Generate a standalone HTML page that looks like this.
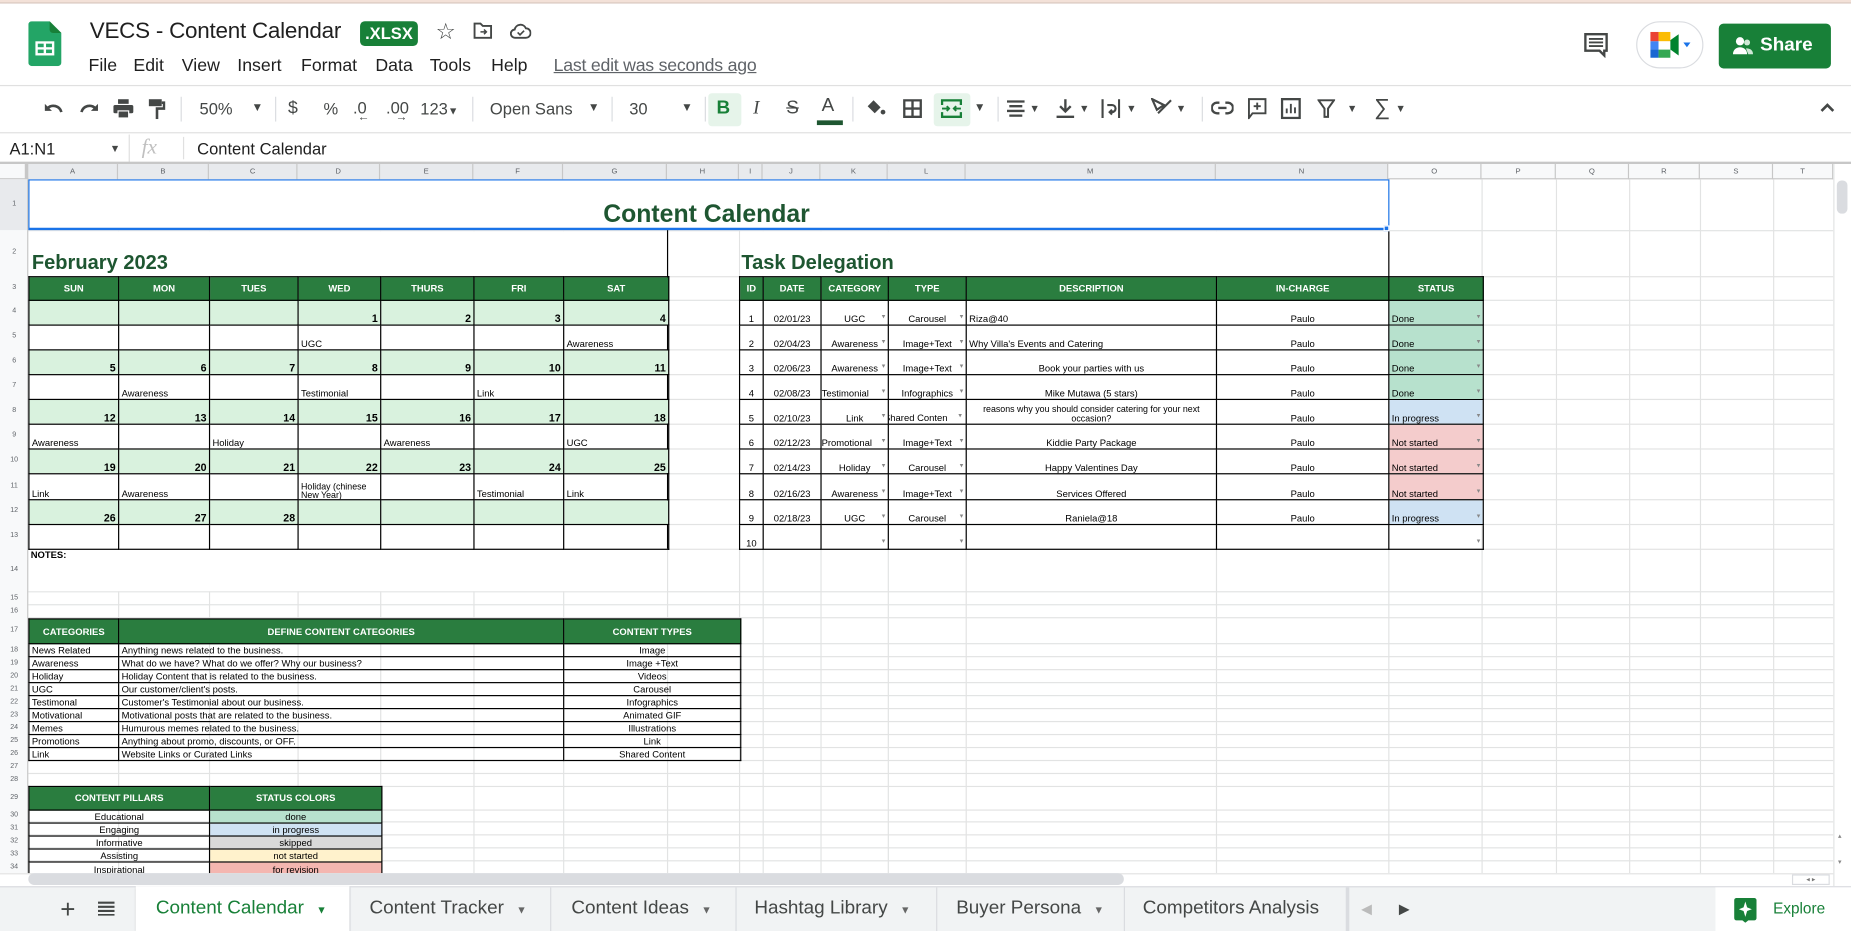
<!DOCTYPE html>
<html><head><meta charset="utf-8"><style>
*{box-sizing:border-box}
html,body{margin:0;padding:0;width:1851px;height:931px;overflow:hidden;background:#fff;font-family:"Liberation Sans",Arial,sans-serif}
#s{position:absolute;left:0;top:0;width:1568px;height:789px;transform:scale(1.18048,1.18);transform-origin:0 0;overflow:hidden;background:#fff}
.a{position:absolute}
.ic{position:absolute;color:#444746;font-size:15px;line-height:1}
.sep{position:absolute;top:82px;width:1px;height:21px;background:#dadce0}
.vl{position:absolute;top:152px;width:1px;height:588px;background:#e2e3e3}
.hl{position:absolute;left:0;width:1553px;height:1px;background:#e2e3e3}
.rn{position:absolute;left:0;width:24px;text-align:center;font-size:6px;color:#5f6368}
.ch{position:absolute;top:139px;height:13px;font-size:6.5px;color:#5f6368;text-align:center;line-height:13px;border-right:1px solid #c7c7c7}
.m{position:absolute;top:47px;font-size:15px;color:#1f1f1f}
table{position:absolute;border-collapse:collapse;table-layout:fixed;font-size:8px;color:#000}
td{border:1px solid #000;padding:0 2px;vertical-align:bottom;white-space:nowrap;overflow:hidden;line-height:9px}
th{background:#2a7d3f;color:#fff;font-size:8px;font-weight:bold;border:1px solid #000;padding:0;text-align:center;vertical-align:middle}
.g td{background:#d9f2de}
.n{text-align:right;font-weight:bold;font-size:9px}
.c{text-align:center}
.dd{position:relative}
.dd:after{content:"▾";position:absolute;right:2px;bottom:1px;font-size:6px;color:#888}
.done{background:#b7e1cd}.prog{background:#cfe2f3}.ns{background:#f4cccc}
.tab{position:absolute;top:751px;height:38px;line-height:38px;font-size:16px;color:#444746}
</style></head><body><div id="s">
<div class="a" style="left:0;top:0;width:1568px;height:3px;background:#f3e1d8;border-bottom:1px solid #d9c8c0"></div>
<svg class="a" style="left:24px;top:18px" width="28" height="38" viewBox="0 0 28 38"><path d="M3 0h15l10 10v25a3 3 0 0 1-3 3H3a3 3 0 0 1-3-3V3a3 3 0 0 1 3-3z" fill="#23a566"/><path d="M18 0l10 10h-7a3 3 0 0 1-3-3z" fill="#188038"/><rect x="6" y="17" width="16" height="12" fill="#fff"/><rect x="8" y="19" width="5" height="3" fill="#23a566"/><rect x="15" y="19" width="5" height="3" fill="#23a566"/><rect x="8" y="24" width="5" height="3" fill="#23a566"/><rect x="15" y="24" width="5" height="3" fill="#23a566"/></svg>
<div class="a" style="left:76px;top:16px;font-size:19px;color:#1f1f1f;letter-spacing:-0.2px">VECS - Content Calendar</div>
<div class="a" style="left:305px;top:18px;width:49px;height:21px;background:#188038;border-radius:4px;color:#fff;font-size:14px;font-weight:bold;text-align:center;line-height:21px">.XLSX</div>
<div class="a" style="left:369px;top:16px;font-size:19px;color:#444746">☆</div>
<svg class="a" style="left:401px;top:19px" width="16" height="14" viewBox="0 0 16 14"><path d="M1 1h5l2 2h7v10H1z" fill="none" stroke="#444746" stroke-width="1.6"/><path d="M6 8h5M9 6l2 2-2 2" fill="none" stroke="#444746" stroke-width="1.3"/></svg>
<svg class="a" style="left:432px;top:19px" width="18" height="14" viewBox="0 0 18 14"><path d="M4.5 13a3.5 3.5 0 0 1-.5-7A5 5 0 0 1 13.5 5a3.8 3.8 0 0 1 0 8z" fill="none" stroke="#444746" stroke-width="1.6"/><path d="M6.5 8.5l2 2 3.5-3.5" fill="none" stroke="#444746" stroke-width="1.4"/></svg>
<div class="m" style="left:75px">File</div><div class="m" style="left:113px">Edit</div><div class="m" style="left:154px">View</div><div class="m" style="left:201px">Insert</div><div class="m" style="left:255px">Format</div><div class="m" style="left:318px">Data</div><div class="m" style="left:364px">Tools</div><div class="m" style="left:416px">Help</div>
<div class="a" style="left:469px;top:47px;font-size:15px;color:#5f6368;text-decoration:underline;letter-spacing:-0.2px">Last edit was seconds ago</div>
<svg class="a" style="left:1341px;top:27px" width="22" height="22" viewBox="0 0 22 22"><path d="M2 2h18v14h-2v4l-4-4H2z" fill="none" stroke="#444746" stroke-width="2"/><path d="M5 6h12M5 9h12M5 12h12" stroke="#444746" stroke-width="1.6"/></svg>
<div class="a" style="left:1386px;top:18px;width:57px;height:40px;border:1px solid #dadce0;border-radius:20px;background:#fff"></div>
<svg class="a" style="left:1398px;top:27px" width="36" height="22" viewBox="0 0 36 22"><rect x="0" y="0" width="7" height="8" fill="#ea4335"/><rect x="7" y="0" width="10" height="8" fill="#fbbc04"/><rect x="0" y="8" width="7" height="7" fill="#4285f4"/><rect x="0" y="15" width="7" height="7" fill="#1967d2"/><rect x="7" y="15" width="10" height="7" fill="#34a853"/><rect x="7" y="8" width="10" height="7" fill="#fff"/><path d="M17 7l7-5v18l-7-5z" fill="#00832d"/><path d="M28 9h6l-3 4z" fill="#1a73e8"/></svg>
<div class="a" style="left:1456px;top:20px;width:95px;height:38px;background:#188038;border-radius:4px;color:#fff;font-size:16px;font-weight:bold;line-height:38px;padding-left:35px">Share</div>
<svg class="a" style="left:1468px;top:30px" width="18" height="17" viewBox="0 0 18 17"><circle cx="6" cy="5" r="3.5" fill="#fff"/><path d="M0 16c0-4 3-6 6-6s6 2 6 6z" fill="#fff"/><circle cx="12" cy="6" r="2.5" fill="#cfe8d6"/><path d="M11 11c3 0 6 1 6 5h-4z" fill="#cfe8d6"/></svg>
<div class="a" style="left:0;top:72px;width:1568px;height:1px;background:#e0e0e0"></div>
<div class="a" style="left:0;top:112px;width:1568px;height:1px;background:#e0e0e0"></div>
<svg class="a" style="left:37px;top:85px" width="18" height="14" viewBox="0 0 18 14"><path d="M3 7a7 7 0 0 1 12 3" fill="none" stroke="#444746" stroke-width="2.2"/><path d="M1 3v6h6z" fill="#444746"/></svg>
<svg class="a" style="left:66px;top:85px" width="18" height="14" viewBox="0 0 18 14"><path d="M15 7a7 7 0 0 0-12 3" fill="none" stroke="#444746" stroke-width="2.2"/><path d="M17 3v6h-6z" fill="#444746"/></svg>
<svg class="a" style="left:96px;top:84px" width="17" height="16" viewBox="0 0 17 16"><rect x="4" y="0" width="9" height="4" fill="#444746"/><rect x="0" y="5" width="17" height="7" rx="1.5" fill="#444746"/><rect x="4" y="10" width="9" height="6" fill="#444746" stroke="#fff" stroke-width="1"/></svg>
<svg class="a" style="left:126px;top:84px" width="14" height="17" viewBox="0 0 14 17"><rect x="0" y="0" width="11" height="6" fill="#444746"/><path d="M11 3h2v5H7v9" fill="none" stroke="#444746" stroke-width="2.2"/></svg>
<div class="sep" style="left:153px"></div>
<div class="ic" style="left:169px;top:85px;font-size:14px">50%</div><div class="ic" style="left:213px;top:87px;font-size:10px">▼</div>
<div class="sep" style="left:233px"></div>
<div class="ic" style="left:244px;top:84px;font-size:15px">$</div>
<div class="ic" style="left:274px;top:85px;font-size:14px">%</div>
<div class="ic" style="left:299px;top:84px;font-size:14px">.0</div><div class="ic" style="left:303px;top:95px;font-size:10px">←</div>
<div class="ic" style="left:327px;top:84px;font-size:14px">.00</div><div class="ic" style="left:335px;top:95px;font-size:10px">→</div>
<div class="ic" style="left:356px;top:85px;font-size:14px">123<span style="font-size:9px">▼</span></div>
<div class="sep" style="left:400px"></div>
<div class="ic" style="left:415px;top:85px;font-size:14px">Open Sans</div><div class="ic" style="left:498px;top:87px;font-size:10px">▼</div>
<div class="sep" style="left:518px"></div>
<div class="ic" style="left:533px;top:85px;font-size:14px">30</div><div class="ic" style="left:577px;top:87px;font-size:10px">▼</div>
<div class="sep" style="left:597px"></div>
<div class="a" style="left:600px;top:79px;width:28px;height:28px;background:#e6f4ea;border-radius:3px"></div>
<div class="ic" style="left:607px;top:84px;font-size:16px;font-weight:bold;color:#188038">B</div>
<div class="ic" style="left:638px;top:84px;font-size:16px;font-style:italic;font-family:'Liberation Serif',serif">I</div>
<div class="ic" style="left:666px;top:84px;font-size:16px;text-decoration:line-through">S</div>
<div class="ic" style="left:696px;top:82px;font-size:16px">A</div><div class="a" style="left:692px;top:102px;width:22px;height:4px;background:#1e5631"></div>
<div class="sep" style="left:722px"></div>
<svg class="a" style="left:734px;top:84px" width="17" height="16" viewBox="0 0 17 16"><path d="M6 1l6 6-5 5-6-6z" fill="#444746"/><circle cx="14" cy="11" r="2" fill="#444746"/></svg>
<svg class="a" style="left:765px;top:84px" width="16" height="16" viewBox="0 0 16 16"><rect x="1" y="1" width="14" height="14" fill="none" stroke="#444746" stroke-width="2"/><path d="M8 1v14M1 8h14" stroke="#444746" stroke-width="2"/></svg>
<div class="a" style="left:791px;top:79px;width:31px;height:28px;background:#e6f4ea;border-radius:3px"></div>
<svg class="a" style="left:797px;top:84px" width="18" height="16" viewBox="0 0 18 16"><path d="M1 5V1h16v4M1 11v4h16v-4" fill="none" stroke="#188038" stroke-width="2"/><path d="M1 8h6M17 8h-6M5 6l2 2-2 2M13 6l-2 2 2 2" fill="none" stroke="#188038" stroke-width="1.6"/></svg>
<div class="ic" style="left:825px;top:87px;font-size:10px">▼</div>
<div class="sep" style="left:845px"></div>
<svg class="a" style="left:853px;top:85px" width="15" height="14" viewBox="0 0 15 14"><path d="M0 1h15M2 5h11M0 9h15M2 13h11" stroke="#444746" stroke-width="2"/></svg><div class="ic" style="left:872px;top:88px;font-size:9px">▼</div>
<svg class="a" style="left:895px;top:84px" width="15" height="16" viewBox="0 0 15 16"><path d="M7.5 0v10M3 6l4.5 4.5L12 6M0 15h15" fill="none" stroke="#444746" stroke-width="2"/></svg><div class="ic" style="left:914px;top:88px;font-size:9px">▼</div>
<svg class="a" style="left:933px;top:84px" width="16" height="16" viewBox="0 0 16 16"><path d="M1 0v16M15 0v16M5 5h4a3 3 0 0 1 0 6H7M9 9l-2 2 2 2" fill="none" stroke="#444746" stroke-width="1.8"/></svg><div class="ic" style="left:954px;top:88px;font-size:9px">▼</div>
<svg class="a" style="left:975px;top:83px" width="18" height="18" viewBox="0 0 18 18"><path d="M1 1l10 5-6 4zM6 13l11-11" fill="none" stroke="#444746" stroke-width="1.8"/></svg><div class="ic" style="left:996px;top:88px;font-size:9px">▼</div>
<div class="sep" style="left:1018px"></div>
<svg class="a" style="left:1026px;top:86px" width="19" height="11" viewBox="0 0 19 11"><path d="M7 1H5a4.5 4.5 0 0 0 0 9h2M12 1h2a4.5 4.5 0 0 1 0 9h-2M6 5.5h7" fill="none" stroke="#444746" stroke-width="2"/></svg>
<svg class="a" style="left:1057px;top:83px" width="16" height="18" viewBox="0 0 16 18"><path d="M1 1h14v12H4l-3 4z" fill="none" stroke="#444746" stroke-width="1.6"/><path d="M8 4v6M5 7h6" stroke="#444746" stroke-width="1.6"/></svg>
<svg class="a" style="left:1085px;top:83px" width="17" height="18" viewBox="0 0 17 18"><rect x="1" y="1" width="15" height="16" fill="none" stroke="#444746" stroke-width="2"/><path d="M5 13V9M8.5 13V5M12 13V8" stroke="#444746" stroke-width="1.6"/></svg>
<svg class="a" style="left:1116px;top:84px" width="15" height="16" viewBox="0 0 15 16"><path d="M1 1h13L9 8v7H6V8z" fill="none" stroke="#444746" stroke-width="1.7"/></svg><div class="ic" style="left:1141px;top:88px;font-size:9px">▼</div>
<div class="ic" style="left:1164px;top:82px;font-size:19px">∑</div><div class="ic" style="left:1182px;top:88px;font-size:9px">▼</div>
<svg class="a" style="left:1542px;top:87px" width="12" height="8" viewBox="0 0 12 8"><path d="M1 7l5-5 5 5" fill="none" stroke="#444746" stroke-width="2.2"/></svg>
<div class="a" style="left:8px;top:118px;font-size:14px;color:#1f1f1f">A1:N1</div>
<div class="ic" style="left:93px;top:122px;font-size:9px">▼</div>
<div class="a" style="left:109px;top:114px;width:1px;height:24px;background:#e0e0e0"></div>
<div class="a" style="left:120px;top:114px;font-size:18px;color:#c0c0c0;font-style:italic;font-family:'Liberation Serif',serif">fx</div>
<div class="a" style="left:155px;top:116px;width:1px;height:19px;background:#e0e0e0"></div>
<div class="a" style="left:167px;top:118px;font-size:14px;color:#1f1f1f">Content Calendar</div>
<div class="a" style="left:0;top:137px;width:1568px;height:2px;background:#c7c7c7"></div>
<div class="a" style="left:0;top:139px;width:1568px;height:13px;background:#f8f9fa;border-bottom:1px solid #c7c7c7"></div>
<div class="a" style="left:24px;top:139px;width:1152px;height:13px;background:#e8eaed"></div>
<div class="ch" style="left:0;width:24px;border-right:3px solid #c7c7c7"></div>
<div class="ch" style="left:24px;width:76px">A</div><div class="ch" style="left:100px;width:77px">B</div><div class="ch" style="left:177px;width:75px">C</div><div class="ch" style="left:252px;width:70px">D</div><div class="ch" style="left:322px;width:79px">E</div><div class="ch" style="left:401px;width:76px">F</div><div class="ch" style="left:477px;width:88px">G</div><div class="ch" style="left:565px;width:61px">H</div><div class="ch" style="left:626px;width:20px">I</div><div class="ch" style="left:646px;width:49px">J</div><div class="ch" style="left:695px;width:57px">K</div><div class="ch" style="left:752px;width:66px">L</div><div class="ch" style="left:818px;width:212px">M</div><div class="ch" style="left:1030px;width:146px">N</div><div class="ch" style="left:1176px;width:79px">O</div><div class="ch" style="left:1255px;width:63px">P</div><div class="ch" style="left:1318px;width:62px">Q</div><div class="ch" style="left:1380px;width:60px">R</div><div class="ch" style="left:1440px;width:62px">S</div><div class="ch" style="left:1502px;width:51px">T</div>
<div class="vl" style="left:100px"></div><div class="vl" style="left:177px"></div><div class="vl" style="left:252px"></div><div class="vl" style="left:322px"></div><div class="vl" style="left:401px"></div><div class="vl" style="left:477px"></div><div class="vl" style="left:565px"></div><div class="vl" style="left:626px"></div><div class="vl" style="left:646px"></div><div class="vl" style="left:695px"></div><div class="vl" style="left:752px"></div><div class="vl" style="left:818px"></div><div class="vl" style="left:1030px"></div><div class="vl" style="left:1176px"></div><div class="vl" style="left:1255px"></div><div class="vl" style="left:1318px"></div><div class="vl" style="left:1380px"></div><div class="vl" style="left:1440px"></div><div class="vl" style="left:1502px"></div>
<div class="hl" style="top:195px"></div><div class="hl" style="top:234px"></div><div class="hl" style="top:254px"></div><div class="hl" style="top:275px"></div><div class="hl" style="top:296px"></div><div class="hl" style="top:317px"></div><div class="hl" style="top:338px"></div><div class="hl" style="top:359px"></div><div class="hl" style="top:380px"></div><div class="hl" style="top:401px"></div><div class="hl" style="top:423px"></div><div class="hl" style="top:444px"></div><div class="hl" style="top:465px"></div><div class="hl" style="top:501px"></div><div class="hl" style="top:512px"></div><div class="hl" style="top:523px"></div><div class="hl" style="top:545px"></div><div class="hl" style="top:556px"></div><div class="hl" style="top:567px"></div><div class="hl" style="top:578px"></div><div class="hl" style="top:589px"></div><div class="hl" style="top:600px"></div><div class="hl" style="top:611px"></div><div class="hl" style="top:622px"></div><div class="hl" style="top:633px"></div><div class="hl" style="top:644px"></div><div class="hl" style="top:655px"></div><div class="hl" style="top:666px"></div><div class="hl" style="top:686px"></div><div class="hl" style="top:696px"></div><div class="hl" style="top:707px"></div><div class="hl" style="top:718px"></div><div class="hl" style="top:729px"></div>
<div class="a" style="left:25px;top:152px;width:1151px;height:43px;background:#fff"></div>
<div class="a" style="left:25px;top:196px;width:540px;height:38px;background:#fff"></div>
<div class="a" style="left:627px;top:196px;width:549px;height:38px;background:#fff"></div>
<div class="a" style="left:25px;top:466px;width:540px;height:35px;background:#fff"></div>
<div class="a" style="left:565px;top:195px;width:1px;height:270px;background:#000"></div>
<div class="a" style="left:1176px;top:195px;width:1px;height:40px;background:#000"></div>
<div class="a" style="left:0;top:152px;width:24px;height:588px;background:#f8f9fa;border-right:1px solid #c7c7c7"></div>
<div class="a" style="left:0;top:152px;width:24px;height:43px;background:#e8eaed;border-right:1px solid #c7c7c7"></div>
<div class="rn" style="top:170px">1</div><div class="rn" style="top:211px">2</div><div class="rn" style="top:241px">3</div><div class="rn" style="top:261px">4</div><div class="rn" style="top:282px">5</div><div class="rn" style="top:303px">6</div><div class="rn" style="top:324px">7</div><div class="rn" style="top:345px">8</div><div class="rn" style="top:366px">9</div><div class="rn" style="top:387px">10</div><div class="rn" style="top:409px">11</div><div class="rn" style="top:430px">12</div><div class="rn" style="top:451px">13</div><div class="rn" style="top:480px">14</div><div class="rn" style="top:504px">15</div><div class="rn" style="top:515px">16</div><div class="rn" style="top:531px">17</div><div class="rn" style="top:548px">18</div><div class="rn" style="top:559px">19</div><div class="rn" style="top:570px">20</div><div class="rn" style="top:581px">21</div><div class="rn" style="top:592px">22</div><div class="rn" style="top:603px">23</div><div class="rn" style="top:614px">24</div><div class="rn" style="top:625px">25</div><div class="rn" style="top:636px">26</div><div class="rn" style="top:647px">27</div><div class="rn" style="top:658px">28</div><div class="rn" style="top:673px">29</div><div class="rn" style="top:688px">30</div><div class="rn" style="top:699px">31</div><div class="rn" style="top:710px">32</div><div class="rn" style="top:721px">33</div><div class="rn" style="top:732px">34</div>
<div class="a" style="left:511px;top:170px;font-size:21px;font-weight:bold;color:#1e5631">Content Calendar</div>
<div class="a" style="left:27px;top:213px;font-size:17px;font-weight:bold;color:#1e5631">February 2023</div>
<div class="a" style="left:628px;top:213px;font-size:17px;font-weight:bold;color:#1e5631">Task Delegation</div>
<div class="a" style="left:24px;top:152px;width:1153px;height:43px;border:1px solid #1a73e8;border-bottom:2px solid #1a73e8"></div>
<div class="a" style="left:1172px;top:191px;width:5px;height:5px;background:#1a73e8;border:1px solid #fff"></div>
<table style="left:24px;top:234px;width:542px">
<colgroup><col style="width:76px"><col style="width:77px"><col style="width:75px"><col style="width:70px"><col style="width:79px"><col style="width:76px"><col style="width:89px"></colgroup>
<tr style="height:20px"><th>SUN</th><th>MON</th><th>TUES</th><th>WED</th><th>THURS</th><th>FRI</th><th>SAT</th></tr>
<tr class="g" style="height:21px"><td></td><td></td><td></td><td class="n">1</td><td class="n">2</td><td class="n">3</td><td class="n">4</td></tr>
<tr style="height:21px"><td></td><td></td><td></td><td>UGC</td><td></td><td></td><td>Awareness</td></tr>
<tr class="g" style="height:21px"><td class="n">5</td><td class="n">6</td><td class="n">7</td><td class="n">8</td><td class="n">9</td><td class="n">10</td><td class="n">11</td></tr>
<tr style="height:21px"><td></td><td>Awareness</td><td></td><td>Testimonial</td><td></td><td>Link</td><td></td></tr>
<tr class="g" style="height:21px"><td class="n">12</td><td class="n">13</td><td class="n">14</td><td class="n">15</td><td class="n">16</td><td class="n">17</td><td class="n">18</td></tr>
<tr style="height:21px"><td>Awareness</td><td></td><td>Holiday</td><td></td><td>Awareness</td><td></td><td>UGC</td></tr>
<tr class="g" style="height:21px"><td class="n">19</td><td class="n">20</td><td class="n">21</td><td class="n">22</td><td class="n">23</td><td class="n">24</td><td class="n">25</td></tr>
<tr style="height:22px"><td>Link</td><td>Awareness</td><td></td><td style="white-space:normal;line-height:7px;font-size:7.5px">Holiday (chinese New Year)</td><td></td><td>Testimonial</td><td>Link</td></tr>
<tr class="g" style="height:21px"><td class="n">26</td><td class="n">27</td><td class="n">28</td><td></td><td></td><td></td><td></td></tr>
<tr style="height:21px"><td></td><td></td><td></td><td></td><td></td><td></td><td></td></tr>
</table>
<div class="a" style="left:26px;top:466px;font-size:8px;font-weight:bold">NOTES:</div>
<table style="left:626px;top:234px;width:630px">
<colgroup><col style="width:20px"><col style="width:49px"><col style="width:57px"><col style="width:66px"><col style="width:212px"><col style="width:146px"><col style="width:80px"></colgroup>
<tr style="height:20px"><th>ID</th><th>DATE</th><th>CATEGORY</th><th>TYPE</th><th>DESCRIPTION</th><th>IN-CHARGE</th><th>STATUS</th></tr>
<tr style="height:21px"><td class="c">1</td><td class="c">02/01/23</td><td class="c dd">UGC</td><td class="c dd">Carousel</td><td>Riza@40</td><td class="c">Paulo</td><td class="dd done">Done</td></tr>
<tr style="height:21px"><td class="c">2</td><td class="c">02/04/23</td><td class="c dd">Awareness</td><td class="c dd">Image+Text</td><td>Why Villa's Events and Catering</td><td class="c">Paulo</td><td class="dd done">Done</td></tr>
<tr style="height:21px"><td class="c">3</td><td class="c">02/06/23</td><td class="c dd">Awareness</td><td class="c dd">Image+Text</td><td class="c">Book your parties with us</td><td class="c">Paulo</td><td class="dd done">Done</td></tr>
<tr style="height:21px"><td class="c">4</td><td class="c">02/08/23</td><td class="dd" style="padding:0">Testimonial</td><td class="c dd">Infographics</td><td class="c">Mike Mutawa (5 stars)</td><td class="c">Paulo</td><td class="dd done">Done</td></tr>
<tr style="height:21px"><td class="c">5</td><td class="c">02/10/23</td><td class="c dd">Link</td><td class="dd" style="padding:0;text-indent:-4px">Shared Conten</td><td class="c" style="white-space:normal;line-height:8px;font-size:7.5px">reasons why you should consider catering for your next occasion?</td><td class="c">Paulo</td><td class="dd prog">In progress</td></tr>
<tr style="height:21px"><td class="c">6</td><td class="c">02/12/23</td><td class="dd" style="padding:0">Promotional</td><td class="c dd">Image+Text</td><td class="c">Kiddie Party Package</td><td class="c">Paulo</td><td class="dd ns">Not started</td></tr>
<tr style="height:21px"><td class="c">7</td><td class="c">02/14/23</td><td class="c dd">Holiday</td><td class="c dd">Carousel</td><td class="c">Happy Valentines Day</td><td class="c">Paulo</td><td class="dd ns">Not started</td></tr>
<tr style="height:22px"><td class="c">8</td><td class="c">02/16/23</td><td class="c dd">Awareness</td><td class="c dd">Image+Text</td><td class="c">Services Offered</td><td class="c">Paulo</td><td class="dd ns">Not started</td></tr>
<tr style="height:21px"><td class="c">9</td><td class="c">02/18/23</td><td class="c dd">UGC</td><td class="c dd">Carousel</td><td class="c">Raniela@18</td><td class="c">Paulo</td><td class="dd prog">In progress</td></tr>
<tr style="height:21px"><td class="c">10</td><td></td><td class="dd"></td><td class="dd"></td><td></td><td></td><td class="dd"></td></tr>
</table>
<table style="left:24px;top:524px;width:603px">
<colgroup><col style="width:76px"><col style="width:377px"><col style="width:150px"></colgroup>
<tr style="height:21px"><th>CATEGORIES</th><th>DEFINE CONTENT CATEGORIES</th><th>CONTENT TYPES</th></tr>
<tr style="height:11px"><td>News Related</td><td>Anything news related to the business.</td><td class="c">Image</td></tr>
<tr style="height:11px"><td>Awareness</td><td>What do we have? What do we offer? Why our business?</td><td class="c">Image +Text</td></tr>
<tr style="height:11px"><td>Holiday</td><td>Holiday Content that is related to the business.</td><td class="c">Videos</td></tr>
<tr style="height:11px"><td>UGC</td><td>Our customer/client's posts.</td><td class="c">Carousel</td></tr>
<tr style="height:11px"><td>Testimonal</td><td>Customer's Testimonial about our business.</td><td class="c">Infographics</td></tr>
<tr style="height:11px"><td>Motivational</td><td>Motivational posts that are related to the business.</td><td class="c">Animated GIF</td></tr>
<tr style="height:11px"><td>Memes</td><td>Humurous memes related to the business.</td><td class="c">Illustrations</td></tr>
<tr style="height:11px"><td>Promotions</td><td>Anything about promo, discounts, or OFF.</td><td class="c">Link</td></tr>
<tr style="height:11px"><td>Link</td><td>Website Links or Curated Links</td><td class="c">Shared Content</td></tr>
</table>
<table style="left:24px;top:666px;width:299px">
<colgroup><col style="width:153px"><col style="width:146px"></colgroup>
<tr style="height:20px"><th>CONTENT PILLARS</th><th>STATUS COLORS</th></tr>
<tr style="height:11px"><td class="c">Educational</td><td class="c" style="background:#b7e1cd">done</td></tr>
<tr style="height:11px"><td class="c">Engaging</td><td class="c" style="background:#cfe2f3">in progress</td></tr>
<tr style="height:11px"><td class="c">Informative</td><td class="c" style="background:#d9d9d9">skipped</td></tr>
<tr style="height:11px"><td class="c">Assisting</td><td class="c" style="background:#fff2cc">not started</td></tr>
<tr style="height:11px"><td class="c" style="border-bottom:none">Inspirational</td><td class="c" style="background:#f4b6b0;border-bottom:none">for revision</td></tr>
</table>
<div class="a" style="left:0;top:740px;width:1568px;height:11px;background:#fff;border-top:1px solid #e2e3e3"></div>
<div class="a" style="left:24px;top:740px;width:928px;height:10px;background:#dadce0;border-radius:5px"></div>
<div class="a" style="left:1518px;top:741px;width:32px;height:9px;border:1px solid #dadce0;font-size:6px;color:#777;line-height:8px;text-align:center">◂ ▸</div>
<div class="a" style="left:1553px;top:139px;width:15px;height:612px;background:#fff;border-left:1px solid #e2e3e3"></div>
<div class="a" style="left:1556px;top:153px;width:9px;height:28px;background:#dadce0;border-radius:4px"></div>
<div class="a" style="left:1557px;top:705px;font-size:6px;color:#888">▴</div>
<div class="a" style="left:1557px;top:727px;font-size:6px;color:#888">▾</div>
<div class="a" style="left:0;top:751px;width:1568px;height:38px;background:#f1f3f4;border-top:1px solid #dadce0"></div>
<div class="a" style="left:51px;top:758px;font-size:22px;color:#444746">+</div>
<svg class="a" style="left:83px;top:764px" width="14" height="12" viewBox="0 0 14 12"><path d="M0 1h14M0 4.5h14M0 8h14M0 11.5h14" stroke="#444746" stroke-width="1.8"/></svg>
<div class="a" style="left:115px;top:751px;width:181px;height:38px;background:#fff;box-shadow:0 1px 2px rgba(0,0,0,.2)"></div>
<div class="tab" style="left:132px;color:#188038">Content Calendar <span style="font-size:9px;margin-left:6px">▼</span></div>
<div class="a" style="left:296px;top:752px;width:1px;height:37px;background:#dadce0"></div>
<div class="tab" style="left:313px">Content Tracker <span style="font-size:9px;margin-left:6px;color:#666">▼</span></div>
<div class="a" style="left:466px;top:752px;width:1px;height:37px;background:#dadce0"></div>
<div class="tab" style="left:484px">Content Ideas <span style="font-size:9px;margin-left:6px;color:#666">▼</span></div>
<div class="a" style="left:623px;top:752px;width:1px;height:37px;background:#dadce0"></div>
<div class="tab" style="left:639px">Hashtag Library <span style="font-size:9px;margin-left:6px;color:#666">▼</span></div>
<div class="a" style="left:793px;top:752px;width:1px;height:37px;background:#dadce0"></div>
<div class="tab" style="left:810px">Buyer Persona <span style="font-size:9px;margin-left:6px;color:#666">▼</span></div>
<div class="a" style="left:952px;top:752px;width:1px;height:37px;background:#dadce0"></div>
<div class="tab" style="left:968px">Competitors Analysis</div>
<div class="a" style="left:1140px;top:752px;width:3px;height:37px;background:#dadce0"></div>
<div class="tab" style="left:1153px;font-size:12px;color:#bbb">◀</div>
<div class="tab" style="left:1185px;font-size:12px;color:#444746">▶</div>
<div class="a" style="left:1453px;top:752px;width:1px;height:37px;background:#dadce0"></div>
<div class="a" style="left:1453px;top:752px;width:115px;height:37px;background:#fff"></div>
<svg class="a" style="left:1469px;top:761px" width="19" height="21" viewBox="0 0 19 21"><path d="M2 0h15a2 2 0 0 1 2 2v15a2 2 0 0 1-2 2h-5l-2.5 2-2.5-2H2a2 2 0 0 1-2-2V2a2 2 0 0 1 2-2z" fill="#188038"/><path d="M9.5 3l1.5 5 4 1.5-4 1.5-1.5 5-1.5-5-4-1.5 4-1.5z" fill="#fff"/></svg>
<div class="tab" style="left:1502px;font-size:13px;color:#188038">Explore</div>
</div></body></html>
